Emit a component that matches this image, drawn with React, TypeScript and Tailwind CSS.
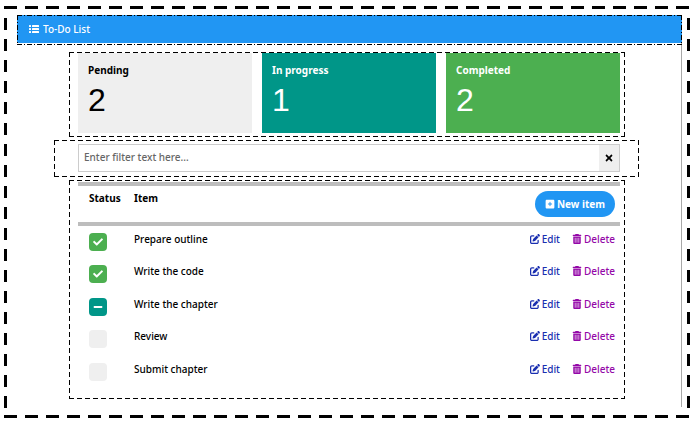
import React, { useState } from "react";
import { FaCheck, FaMinus, FaTimes } from "react-icons/fa";
import { FaPenToSquare, FaSquarePlus, FaTrashCan } from "react-icons/fa6";

type Status = "pending" | "progress" | "done";

const items: { title: string; status: Status }[] = [
  { title: "Prepare outline", status: "done" },
  { title: "Write the code", status: "done" },
  { title: "Write the chapter", status: "progress" },
  { title: "Review", status: "pending" },
  { title: "Submit chapter", status: "pending" },
];

const summary = [
  { label: "Pending", count: 2, look: "bg-[#efefef] text-black" },
  { label: "In progress", count: 1, look: "bg-[#009688] text-white" },
  { label: "Completed", count: 2, look: "bg-[#4caf50] text-white" },
];

const statusLook: Record<Status, string> = {
  done: "bg-[#4caf50] text-white",
  progress: "bg-[#009688] text-white",
  pending: "bg-[#efefef]",
};

const outlines = {
  outer: {
    h: "h-[3px] bg-[repeating-linear-gradient(90deg,#000_0_13px,transparent_13px_21px)]",
    v: "top-3 bottom-2 w-[3px] bg-[repeating-linear-gradient(180deg,#000_0_12px,transparent_12px_21px)]",
  },
  inner: {
    h: "h-px bg-[repeating-linear-gradient(90deg,#000_0_5px,transparent_5px_8px)]",
    v: "inset-y-0 w-px bg-[repeating-linear-gradient(180deg,#000_0_5px,transparent_5px_8px)]",
  },
  dotted: {
    h: "h-px bg-[repeating-linear-gradient(90deg,#000_0_5px,transparent_5px_7px,#000_7px_8px,transparent_8px_10px)]",
    v: "inset-y-0 w-px bg-[repeating-linear-gradient(180deg,#000_0_5px,transparent_5px_7px,#000_7px_8px,transparent_8px_10px)]",
  },
};

function Outline({ kind }: { kind: keyof typeof outlines }) {
  const { h, v } = outlines[kind];
  return (
    <span aria-hidden="true" className="pointer-events-none absolute inset-0">
      <span className={`absolute inset-x-0 top-0 ${h}`} />
      <span className={`absolute inset-x-0 bottom-0 ${h}`} />
      <span className={`absolute left-0 ${v}`} />
      <span className={`absolute right-0 ${v}`} />
    </span>
  );
}

function ListIcon() {
  return (
    <svg viewBox="0 0 20 16" className="ml-3 h-2 w-2.5" fill="currentColor" aria-hidden="true">
      {[0, 6, 12].map((y) => (
        <g key={y}>
          <rect x="0" y={y} width="4" height="4" rx="1" />
          <rect x="6" y={y} width="14" height="4" rx="0.5" />
        </g>
      ))}
    </svg>
  );
}

export default function App() {
  const [filter, setFilter] = useState("");
  const shown = items.filter((i) => i.title.toLowerCase().includes(filter.toLowerCase()));

  return (
    <div className="bg-white pt-1.5 pr-[7px] pb-2.5 pl-1 font-['Noto_Sans',sans-serif] text-[10px] leading-4 font-medium text-black">
      <div className="relative pt-[9px] pr-2 pb-[11px] pl-[13px]">
        <Outline kind="outer" />
        <div className="border-r border-[#a8a8a8] pb-2">
          <header className="relative -mr-px flex h-[30px] items-center gap-1 bg-[#2196f3] bg-clip-content pb-0.5 text-white">
            <Outline kind="dotted" />
            <ListIcon />
            <h1>To-Do List</h1>
          </header>

          <main className="mt-[7px] pr-14 pl-[52px]">
            <section className="relative grid grid-cols-3 gap-2.5 pt-px pr-[5px] pb-1 pl-[9px]">
              <Outline kind="inner" />
              {summary.map((s) => (
                <div key={s.label} className={`h-20 px-2.5 pt-[9px] ${s.look}`}>
                  <h2 className="font-bold">{s.label}</h2>
                  <p className="font-['Liberation_Sans',sans-serif] text-[32px] leading-[44px] font-normal">{s.count}</p>
                </div>
              ))}
            </section>

            <section className="relative mt-[3px] -mr-3.5 -ml-[15px] pt-1 pr-[19px] pb-[5px] pl-6">
              <Outline kind="inner" />
              <div className="flex h-7 border border-[#ccc]">
                <input
                  aria-label="Filter"
                  value={filter}
                  onChange={(e) => setFilter(e.target.value)}
                  placeholder="Enter filter text here..."
                  className="min-w-0 flex-1 px-[5px] pb-0.5 outline-none placeholder:text-[#666]"
                />
                <button
                  aria-label="Clear filter"
                  onClick={() => setFilter("")}
                  className="flex w-5 items-center justify-center bg-[#efefef]"
                >
                  <FaTimes className="size-[10px]" />
                </button>
              </div>
            </section>

            <section className="relative mt-[3px] pt-0.5 pr-[5px] pb-[11px] pl-[9px]">
              <Outline kind="inner" />
              <table className="w-full border-separate border-spacing-0">
                <thead>
                  <tr className="align-top">
                    <th className="w-14 border-y-4 border-[#bdbdbd] pt-1 pl-[11px] text-left">Status</th>
                    <th className="border-y-4 border-[#bdbdbd] pt-1 text-left">Item</th>
                    <th className="h-11 border-y-4 border-[#bdbdbd] py-[5px] pr-[5px] text-right">
                      <button className="ml-auto flex h-[26px] items-center gap-0.5 rounded-full bg-[#2196f3] px-2.5 font-bold text-white">
                        <FaSquarePlus className="size-[10px]" />
                        New item
                      </button>
                    </th>
                  </tr>
                </thead>
                <tbody>
                  {shown.map((item) => (
                    <tr key={item.title} className="align-top odd:h-8 even:h-[33px]">
                      <td className="pt-[7px] pl-[11px]">
                        <button
                          aria-label={`Status of ${item.title}: ${item.status}`}
                          className={`flex size-[18px] items-center justify-center rounded-sm ${statusLook[item.status]}`}
                        >
                          {item.status === "done" && <FaCheck className="size-[10px]" />}
                          {item.status === "progress" && <FaMinus className="size-[10px]" />}
                        </button>
                      </td>
                      <td className="pt-[5px]">{item.title}</td>
                      <td className="pt-[5px] pr-[5px]">
                        <div className="flex justify-end gap-3">
                          <a href="#edit" className="flex items-center gap-0.5 text-[#1a2fb0]">
                            <FaPenToSquare className="size-[10px]" />
                            Edit
                          </a>
                          <a href="#delete" className="flex items-center gap-0.5 text-[#9408a8]">
                            <FaTrashCan className="size-[10px]" />
                            Delete
                          </a>
                        </div>
                      </td>
                    </tr>
                  ))}
                </tbody>
              </table>
            </section>
          </main>
        </div>
      </div>
    </div>
  );
}
